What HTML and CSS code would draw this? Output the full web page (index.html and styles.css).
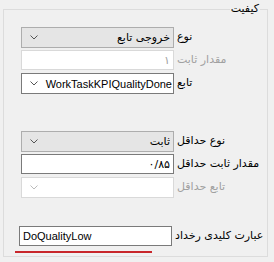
FILE: index.html
```html
<!DOCTYPE html>
<html>
    <head>
        <meta charset="utf-8">
        <title>کیفیت</title>
        <link rel="stylesheet" href="styles.css">
    </head>
    <body>
        <fieldset class="group" dir="rtl">
            <legend>کیفیت</legend>

            <div class="row first">
                <span class="label">نوع</span>
                <div class="combo">
                    <span class="value">خروجی تابع</span>
                    <svg class="arrow" width="8" height="5" viewBox="0 0 8 5"><path d="M0.5 0.5 L4 4 L7.5 0.5" fill="none" stroke="#555" stroke-width="1"/></svg>
                </div>
            </div>
            <div class="row">
                <span class="label off">مقدار ثابت</span>
                <div class="text off"><span class="value">۱</span></div>
            </div>
            <div class="row">
                <span class="label">تابع</span>
                <div class="combo open">
                    <span class="value latin" dir="ltr">WorkTaskKPIQualityDone</span>
                    <svg class="arrow" width="8" height="5" viewBox="0 0 8 5"><path d="M0.5 0.5 L4 4 L7.5 0.5" fill="none" stroke="#555" stroke-width="1"/></svg>
                </div>
            </div>

            <div class="row gap-big">
                <span class="label">نوع حداقل</span>
                <div class="combo">
                    <span class="value">ثابت</span>
                    <svg class="arrow" width="8" height="5" viewBox="0 0 8 5"><path d="M0.5 0.5 L4 4 L7.5 0.5" fill="none" stroke="#555" stroke-width="1"/></svg>
                </div>
            </div>
            <div class="row">
                <span class="label">مقدار ثابت حداقل</span>
                <div class="text"><span class="value">۰/۸۵</span></div>
            </div>
            <div class="row">
                <span class="label off">تابع حداقل</span>
                <div class="combo off">
                    <span class="value"></span>
                    <svg class="arrow" width="8" height="5" viewBox="0 0 8 5"><path d="M0.5 0.5 L4 4 L7.5 0.5" fill="none" stroke="#bbb" stroke-width="1"/></svg>
                </div>
            </div>

            <div class="row last">
                <span class="label">عبارت کلیدی رخداد</span>
                <div class="text"><span class="value latin" dir="ltr">DoQualityLow</span></div>
            </div>
            <div class="underline"></div>
        </fieldset>
    </body>
</html>
```

FILE: styles.css
```css
body {
    margin : 0;
    padding : 2px 6px 0 3px;
    background-color : #f0f0f0;
    font-family : "DejaVu Sans", sans-serif;
    font-size : 11px;
    color : #000;
}

fieldset.group {
    margin : 0;
    padding : 0 0 0 17px;
    border : 1px solid #dcdcdc;
    box-sizing : border-box;
    height : 255px;
}

fieldset.group legend {
    margin-right : 7px;
    padding : 0 1px;
    line-height : 14px;
}

div.row {
    display : grid;
    grid-template-columns : 1fr 153px;
    height : 21px;
    margin-top : 2px;
}

div.row.first {
    margin-top : 11px;
}

div.row.gap-big {
    margin-top : 37px;
}

div.row.last {
    margin-top : 28px;
    margin-left : -2px;
    height : 20px;
}

span.label {
    justify-self : end;
    padding-left : 3px;
    line-height : 14px;
    padding-top : 3px;
    white-space : nowrap;
}

span.label.off {
    color : #a0a0a0;
}

div.combo, div.text {
    display : flex;
    align-items : center;
    box-sizing : border-box;
    border : 1px solid #7a7a7a;
    background-color : #fff;
    padding : 0 3px 0 8px;
}

div.text {
    height : 20px;
}

div.combo {
    height : 21px;
    border-color : #adadad;
    background-color : #e5e5e5;
}

div.combo.open {
    background-color : #fff;
    border-color : #7a7a7a;
    padding-right : 1px;
}

div.combo.off, div.text.off {
    background-color : #fff;
    border-color : #d9d9d9;
    color : #a0a0a0;
}

span.value {
    flex : 1;
    white-space : nowrap;
    overflow : hidden;
}

span.value.latin {
    font-family : "Liberation Sans", Arial, sans-serif;
}

div.combo.open span.value {
    text-align : right;
}

div.row.last span.value {
    text-align : left;
}

div.row.last div.text {
    padding-left : 3px;
}

svg.arrow {
    flex : none;
}

div.underline {
    height : 2px;
    width : 137px;
    margin : 5px auto 0 -6px;
    background-color : #c8262b;
}
```
